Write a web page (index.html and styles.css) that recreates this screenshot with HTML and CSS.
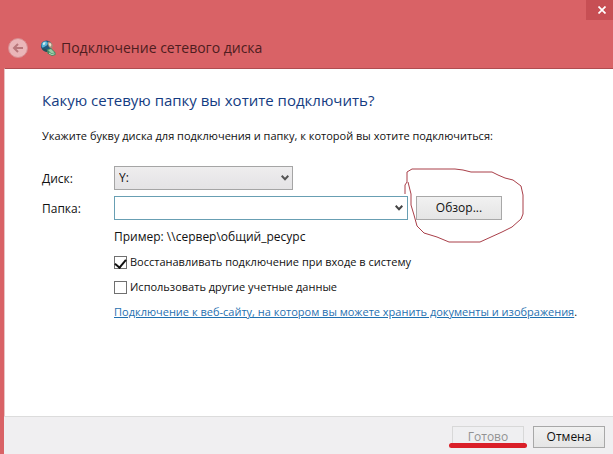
FILE: index.html
```
<!DOCTYPE html>
<html lang="ru">
<head>
    <meta charset="utf-8">
    <title>Подключение сетевого диска</title>
    <link rel="stylesheet" href="styles.css">
</head>
<body>
    <form class="dialog">
        <div class="title-bar">
            <button type="button" class="close-button" aria-label="Закрыть">
                <svg width="8" height="8" viewBox="0 0 8 8"><path d="M0.5 0.5L7.5 7.5M7.5 0.5L0.5 7.5" stroke="#fff" stroke-width="1.7"/></svg>
            </button>
        </div>
        <div class="header">
            <button type="button" class="back-button" aria-label="Назад">
                <svg width="12" height="12" viewBox="0 0 12 12" fill="none" stroke="#b9777b" stroke-width="2"><path d="M11 6H2M6 2L2 6L6 10"/></svg>
            </button>
            <svg class="drive-icon" width="16" height="16" viewBox="0 0 16 16">
                <circle cx="6.5" cy="6" r="5.6" fill="#20597d"/>
                <path d="M1.5 4C3 0.8 6 0.6 7.5 2.2C8.5 4 7 5.5 5 6.5C3.5 7.5 2.5 8 1.8 7Z" fill="#58b4d8"/>
                <path d="M3 2.8L5.5 2L5 4.5L3 5Z" fill="#d2f0f0"/>
                <path d="M8 1.8C10.5 1.5 12.5 3.5 13 6L11.5 9L9 7L8 5Z" fill="#a58c7a"/>
                <path d="M8.5 3.5L10.5 3L11.5 5L10 7Z" fill="#f0dfcc"/>
                <path d="M2 8.5C4 8 6.5 9 8 11.5L6.5 12C4.5 11.5 3 10.5 2 8.5Z" fill="#264f55"/>
                <path d="M7 9.5L11 8L15.5 12.5V15L12 16L7.5 13.5Z" fill="#438b64"/>
                <path d="M8 10L11 9L14.5 12.5L11.5 13.5Z" fill="#9bc9a5"/>
                <path d="M9 13L11.5 14.5L14.5 13.8" fill="none" stroke="#c6e8c9"/>
            </svg>
            <span class="title">Подключение сетевого диска</span>
        </div>

        <div class="content">
            <h1>Какую сетевую папку вы хотите подключить?</h1>
            <p class="hint">Укажите букву диска для подключения и папку, к которой вы хотите подключиться:</p>

            <div class="fields">
                <label for="drive">Диск:</label>
                <div class="drive-box">
                    <select id="drive">
                        <option>Y:</option>
                        <option>Z:</option>
                    </select>
                    <svg class="chevron" width="8" height="6" viewBox="0 0 8 6"><path d="M0.7 0.8L4 4.2L7.3 0.8" fill="none" stroke="#555" stroke-width="2"/></svg>
                </div>

                <label for="folder">Папка:</label>
                <div class="folder-row">
                    <div class="folder-box">
                        <input type="text" id="folder">
                        <button type="button" class="drop-button" aria-label="Показать список">
                            <svg width="8" height="6" viewBox="0 0 8 6"><path d="M0.7 0.8L4 4.2L7.3 0.8" fill="none" stroke="#444" stroke-width="2"/></svg>
                        </button>
                    </div>
                    <div class="browse">
                        <button type="button" class="button browse-button">Обзор...</button>
                        <!-- hand-drawn circle round the button -->
                        <svg class="circle-mark" width="120" height="76" viewBox="0 0 120 76">
                            <path d="M1 26V17L3 14V4L8 1H51L59 2L67 4H88L94 7L101 10L109 12L117 18L119 27V46L117 51L108 59L98 64L87 69L76 74H45L33 69L20 65L13 58L10 47L7 37V26L4 14"/>
                        </svg>
                    </div>
                </div>
            </div>

            <div class="options">
                <p>Пример: \\сервер\общий_ресурс</p>
                <label class="option"><input type="checkbox" checked>Восстанавливать подключение при входе в систему</label>
                <label class="option"><input type="checkbox">Использовать другие учетные данные</label>
                <p class="site-link"><a href="#">Подключение к веб-сайту, на котором вы можете хранить документы и изображения</a>.</p>
            </div>
        </div>

        <div class="footer">
            <div class="finish">
                <button type="submit" class="button" disabled>Готово</button>
                <span class="underline-mark"></span>
            </div>
            <button type="button" class="button">Отмена</button>
        </div>
    </form>
</body>
</html>
```
FILE: styles.css
```
* {
    box-sizing: border-box;
}

body {
    margin: 0;
    font-family: "Open Sans", "Noto Sans", sans-serif;
    font-size: 12px;
    line-height: 16px;
    color: #111;
    background-color: #d96266;
}

button, input, select {
    font: inherit;
    color: inherit;
}

h1, p {
    margin: 0;
}

svg {
    display: block;
}

.dialog {
    display: flex;
    flex-direction: column;
    min-height: 100vh;
    padding-left: 4px;
    white-space: nowrap;
}

.title-bar {
    display: flex;
    justify-content: flex-end;
}

.close-button {
    display: flex;
    justify-content: center;
    align-items: center;
    width: 27px;
    height: 20px;
    padding: 0 0 0 4px;
    border: none;
    background-color: #c74f54;
}

.header {
    display: flex;
    align-items: center;
    height: 48px;
    padding: 8px 4px 0;
}

.back-button {
    display: flex;
    justify-content: center;
    align-items: center;
    width: 20px;
    height: 20px;
    padding: 0;
    border: 1px solid #d98c90;
    border-radius: 50%;
    background-color: #eab6b9;
}

.drive-icon {
    margin: 0 5px 0 12px;
}

.title {
    font-size: 14px;
    line-height: 20px;
    color: #4e1d20;
}

.content {
    flex: 1;
    padding: 20px 16px 16px 37px;
    border-top: 1px solid #b04c50;
    border-left: 1px solid #e9c4c5;
    background-color: #fff;
}

h1 {
    font-size: 15px;
    font-weight: normal;
    line-height: 22px;
    color: #143c82;
}

.hint, .option, .site-link {
    font-size: 11px;
}

.hint {
    margin-top: 17px;
}

.fields {
    display: grid;
    grid-template-columns: 72px 1fr;
    align-items: center;
    row-gap: 6px;
    margin-top: 22px;
}

.fields label {
    padding-top: 2px;
}

.drive-box {
    position: relative;
    width: 179px;
}

.drive-box select {
    display: block;
    appearance: none;
    width: 100%;
    height: 24px;
    padding: 0 4px;
    border: 1px solid #a5a5a5;
    border-radius: 0;
    background: linear-gradient(#eeedee, #e4e3e5);
}

.chevron {
    position: absolute;
    top: 9px;
    right: 4px;
    pointer-events: none;
}

.folder-row {
    display: flex;
    align-items: center;
    gap: 8px;
}

.folder-box {
    display: flex;
    width: 294px;
    height: 24px;
    border: 1px solid #689fb3;
    background-color: #fff;
}

.folder-box input {
    flex: 1;
    min-width: 0;
    padding: 0 4px;
    border: none;
    outline: none;
}

.drop-button {
    padding: 0 4px;
    border: none;
    background: none;
}

.button {
    width: 72px;
    height: 22px;
    padding: 0;
    border: 1px solid #a8a8a8;
    background: linear-gradient(#f1f1f1, #e5e5e5);
}

.button:disabled {
    color: #929292;
    border-color: #d8d8d8;
    background: #efeff1;
}

.browse {
    position: relative;
}

.browse-button {
    display: block;
    width: 86px;
    height: 24px;
}

.circle-mark {
    position: absolute;
    top: -28px;
    left: -12px;
    fill: none;
    stroke: #a93f49;
    pointer-events: none;
}

.options {
    display: flex;
    flex-direction: column;
    gap: 9px;
    margin: 9px 0 0 72px;
}

.option {
    display: flex;
    align-items: center;
    gap: 3px;
}

.option input {
    display: flex;
    justify-content: center;
    appearance: none;
    width: 13px;
    height: 13px;
    margin: 0;
    border: 1px solid #707070;
    background-color: #fff;
}

.option input:checked::before {
    content: "";
    width: 5px;
    height: 9px;
    border: solid #111;
    border-width: 0 2px 2px 0;
    transform: rotate(40deg);
}

.site-link a {
    color: #1f70b0;
}

.footer {
    display: flex;
    justify-content: flex-end;
    gap: 9px;
    padding: 9px 8px 6px;
    border-top: 1px solid #dcdcdc;
    background-color: #f0eff1;
}

.finish {
    position: relative;
}

.underline-mark {
    position: absolute;
    right: -3px;
    bottom: 0;
    left: -3px;
    height: 5px;
    border-radius: 3px;
    background-color: #da1f28;
}
```
